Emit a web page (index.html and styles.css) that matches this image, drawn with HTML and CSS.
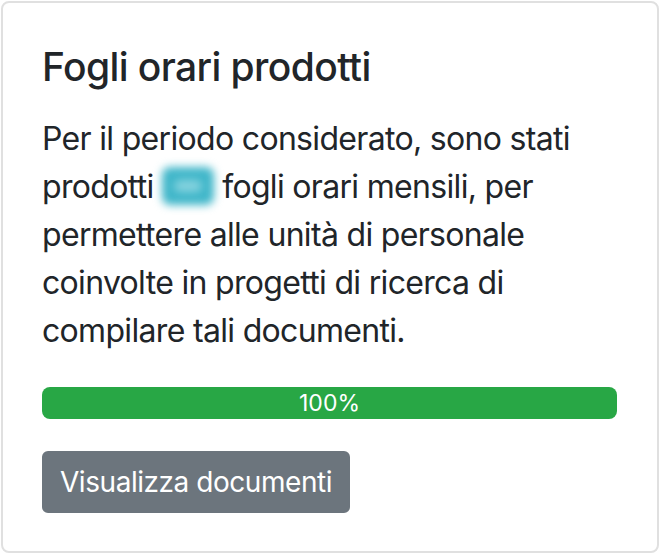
FILE: index.html
```html
<!DOCTYPE html>
<html lang="it">
<head>
<meta charset="utf-8">
<title>Fogli orari prodotti</title>
<link rel="stylesheet" href="styles.css">
</head>
<body>
<div class="page">
  <div class="card">
    <div class="card-body">
      <h5 class="card-title">Fogli orari prodotti</h5>
      <p class="card-text">Per il periodo considerato, sono stati prodotti <span class="badge"><span class="badge-glow"></span></span> fogli orari mensili, per permettere alle unità di personale coinvolte in progetti di ricerca di compilare tali documenti.</p>
      <div class="progress">
        <div class="progress-bar" style="width: 100%">100%</div>
      </div>
      <a class="btn" href="#">Visualizza documenti</a>
    </div>
  </div>
</div>
</body>
</html>
```

FILE: styles.css
```css
html, body {
  margin: 0;
  padding: 0;
  background: #ffffff;
}
body {
  font-family: Inter, "Liberation Sans", sans-serif;
  color: #212529;
}
.page {
  padding: 1px;
}
.card {
  border: 2px solid #e0e0e0;
  border-radius: 8px;
  background: #fff;
}
.card-body {
  padding: 40px 40px 38px 39px;
  display: flex;
  flex-direction: column;
  align-items: flex-start;
}
.card-title {
  margin: 0 0 24px 0;
  font-size: 39px;
  line-height: 48px;
  font-weight: 500;
  letter-spacing: -0.6px;
}
.card-text {
  margin: 0 0 32px 0;
  font-size: 32px;
  line-height: 48px;
  letter-spacing: -0.68px;
}
.badge {
  display: inline-block;
  width: 52px;
  height: 38px;
  vertical-align: -7px;
  background: #3fb6c9;
  border-radius: 8px;
  filter: blur(4px);
  position: relative;
}
.badge-glow {
  position: absolute;
  left: 12px;
  right: 12px;
  top: 13px;
  bottom: 13px;
  background: #86d3df;
  border-radius: 6px;
}
.progress {
  align-self: stretch;
  height: 32px;
  background: #e9ecef;
  border-radius: 8px;
  overflow: hidden;
  display: flex;
  margin-bottom: 32px;
}
.progress-bar {
  width: 100%;
  background: #28a745;
  color: #fff;
  font-size: 23px;
  line-height: 32px;
  text-align: center;
}
.btn {
  display: inline-block;
  background: #6c757d;
  border: 2px solid #6c757d;
  color: #fff;
  font-size: 28px;
  line-height: 42px;
  padding: 8px 16px;
  border-radius: 6px;
  text-decoration: none;
  letter-spacing: -0.45px;
}
```
